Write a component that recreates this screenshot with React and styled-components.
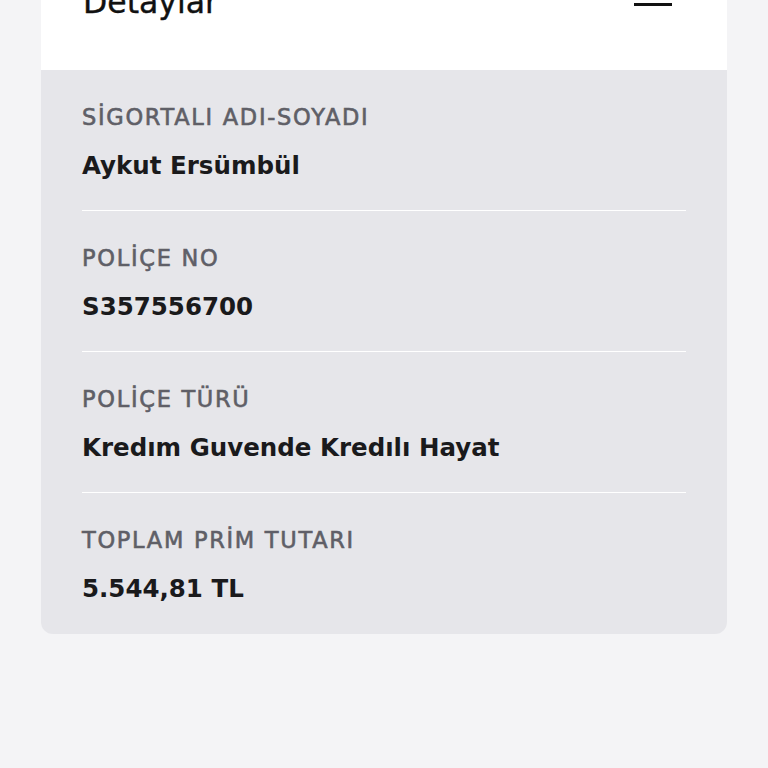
import React from "react";
import styled, { createGlobalStyle } from "styled-components";

const GlobalStyle = createGlobalStyle`
  html, body {
    margin: 0;
    padding: 0;
    background: #f4f4f6;
    font-family: "DejaVu Sans", Inter, sans-serif;
  }
`;

const Page = styled.div`
  padding: 0 41px;
  overflow: hidden;
  height: 768px;
`;

const Card = styled.div`
  margin-top: -40px;
  border-radius: 0 0 12px 12px;
  overflow: hidden;
`;

const Header = styled.div`
  background: #ffffff;
  height: 110px;
  display: flex;
  justify-content: space-between;
  align-items: flex-start;
  padding: 0 55px 0 42px;
  box-sizing: border-box;
`;

const Title = styled.h2`
  margin: 23px 0 0;
  font-size: 31.5px;
  line-height: 38px;
  font-weight: 400;
  color: #111;
  -webkit-text-stroke: 0.4px #111;
`;

const MenuIcon = styled.svg`
  margin-top: 27px;
  display: block;
`;

const Panel = styled.div`
  background: #e6e6ea;
  padding: 0 41px;
`;

const Row = styled.div`
  padding: 35px 0 ${(p) => (p.$last ? "30px" : "29px")};
  border-bottom: ${(p) => (p.$last ? "none" : "1.5px solid #ffffff")};
`;

const Label = styled.div`
  font-size: 22.5px;
  line-height: 24px;
  font-weight: 400;
  letter-spacing: 1.7px;
  color: #5f5f67;
  -webkit-text-stroke: 0.6px #5f5f67;
`;

const Value = styled.div`
  margin-top: 22px;
  font-size: 24.5px;
  line-height: 30px;
  font-weight: 700;
  color: #1a1a1c;
`;

const items = [
  { label: "SİGORTALI ADI-SOYADI", value: "Aykut Ersümbül" },
  { label: "POLİÇE NO", value: "S357556700" },
  { label: "POLİÇE TÜRÜ", value: "Kredım Guvende Kredılı Hayat" },
  { label: "TOPLAM PRİM TUTARI", value: "5.544,81 TL" },
];

export default function App() {
  return (
    <Page>
      <GlobalStyle />
      <Card>
        <Header>
          <Title>Detaylar</Title>
          <MenuIcon width="38" height="20" viewBox="0 0 38 20">
            <rect x="0" y="0" width="38" height="3" fill="#111" />
            <rect x="0" y="8" width="38" height="3" fill="#111" />
            <rect x="0" y="16" width="38" height="3" fill="#111" />
          </MenuIcon>
        </Header>
        <Panel>
          {items.map((it, i) => (
            <Row key={it.label} $last={i === items.length - 1}>
              <Label>{it.label}</Label>
              <Value>{it.value}</Value>
            </Row>
          ))}
        </Panel>
      </Card>
    </Page>
  );
}
